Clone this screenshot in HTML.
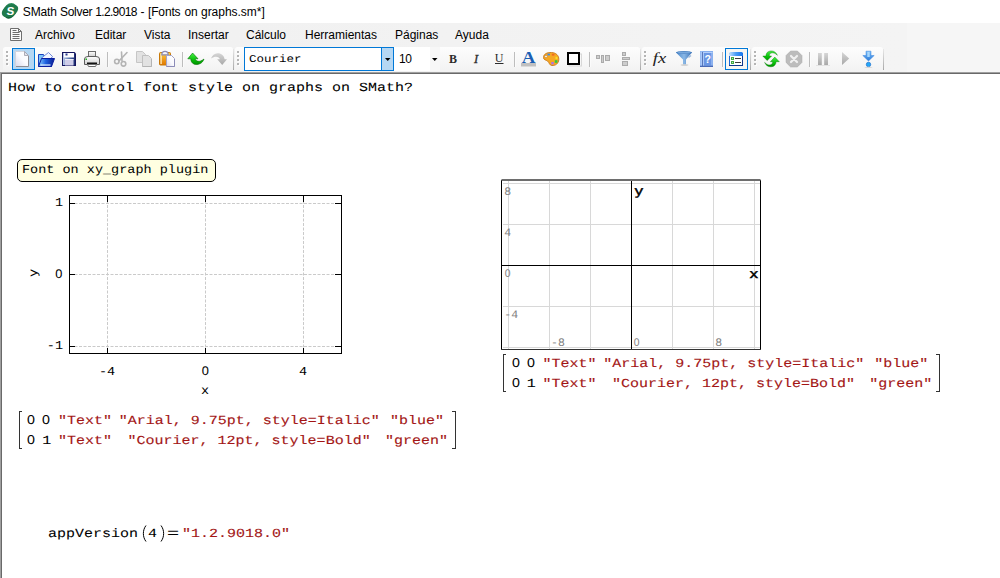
<!DOCTYPE html>
<html><head><meta charset="utf-8"><title>SMath Solver</title>
<style>
html,body{margin:0;padding:0;}
body{width:1000px;height:578px;overflow:hidden;background:linear-gradient(to right,#f0f0f0 0,#f4f4f4 907px,#f6f6f6 907px,#f6f6f6 1000px);position:relative;font-family:"Liberation Sans",sans-serif;font-size:12px;color:#000;}
.abs{position:absolute;}
#title{left:0;top:0;width:1000px;height:23px;background:#fff;}
#title .tw{position:absolute;top:5px;font-size:12px;white-space:pre;line-height:14px;}
#menu{left:0;top:23px;width:1000px;height:23px;}
#menu span{position:absolute;top:5px;line-height:14px;white-space:nowrap;font-size:12px;}
#tb{left:0;top:46px;width:1000px;height:26px;}
#sheet{left:0;top:72px;width:1000px;height:506px;background:#fff;border-top:1px solid #a0a0a0;border-left:1px solid #a0a0a0;box-sizing:border-box;}
#sheet:before{content:"";position:absolute;left:0;top:0;width:1000px;height:1px;background:#696969;}
#sheet:after{content:"";position:absolute;left:0;top:0;width:1px;height:506px;background:#696969;}
.m{font-family:"Liberation Mono",monospace;white-space:pre;position:absolute;line-height:1;text-rendering:geometricPrecision;transform:scaleY(0.83);transform-origin:0 0;}
.f15{font-size:15px;-webkit-text-stroke:0.08px #000;}
.f13{font-size:13.5px;transform:scaleY(0.90);}
.z{position:absolute;font-family:"Liberation Sans",sans-serif;font-size:15px;line-height:1;text-rendering:geometricPrecision;transform:scale(0.95,0.86);transform-origin:0 0;}
.red{color:#a31515;-webkit-text-stroke:0.15px #a31515;}
.lbl{left:17px;top:159px;width:197px;height:21px;border:1px solid #000;border-radius:5px;background:#ffffe1;}
.brl{width:3px;height:38px;border:1px solid #333;border-right:none;box-sizing:border-box;}
.brr{width:4px;height:38px;border:1px solid #333;border-left:none;box-sizing:border-box;}
</style></head><body>
<div id="title" class="abs"><span class="tw" style="left:22.8px;letter-spacing:-0.15px">SMath </span><span class="tw" style="left:60px;letter-spacing:-0.3px">Solver </span><span class="tw" style="left:95.2px;letter-spacing:-0.65px">1.2.9018 </span><span class="tw" style="left:140.4px;letter-spacing:0px">- </span><span class="tw" style="left:148px;letter-spacing:-0.15px">[Fonts </span><span class="tw" style="left:184.4px;letter-spacing:-0.05px">on </span><span class="tw" style="left:201px;letter-spacing:-0.03px">graphs.sm*]</span></div>
<div id="menu" class="abs">
<span style="left:35px">Archivo</span><span style="left:95px">Editar</span><span style="left:144px">Vista</span><span style="left:188px">Insertar</span><span style="left:246px">Cálculo</span><span style="left:305px">Herramientas</span><span style="left:395px">Páginas</span><span style="left:455px">Ayuda</span>
</div>
<svg class="abs" style="left:0;top:0" width="24" height="23" viewBox="0 0 24 23">
<defs><linearGradient id="gLogo" x1="0" y1="0" x2="0" y2="1"><stop offset="0" stop-color="#2f9462"/><stop offset="0.45" stop-color="#1f7a4c"/><stop offset="1" stop-color="#0b5a2f"/></linearGradient></defs>
<ellipse cx="10" cy="10.800" rx="6.300" ry="8.200" transform="rotate(28 10 10.800)" fill="url(#gLogo)"/>
<ellipse cx="10" cy="10.800" rx="8.800" ry="5.800" transform="rotate(-30 10 10.800)" fill="#1f7a4c"/>
<text transform="translate(10.200 15) skewX(-6)" text-anchor="middle" font-family="'Liberation Sans',sans-serif" font-size="11.500" font-weight="bold" fill="#fff">S</text>
</svg>
<svg class="abs" style="left:8px;top:26px" width="16" height="17" viewBox="8 26 16 17">
<path d="M10.500 28.500H18.500L21.500 31.500V40.500H10.500Z" fill="#fbfbfb" stroke="#6e6e6e" stroke-width="1"/>
<path d="M18.500 28.500V31.500H21.500" fill="none" stroke="#6e6e6e" stroke-width="1"/>
<path d="M12.500 30.500H16.500M12.500 32.500H19.500M12.500 34.500H19.500M12.500 36.500H19.500M12.500 38.500H19.500" stroke="#6e6e6e" stroke-width="1"/>
</svg>
<div id="tb" class="abs"></div>
<svg class="abs" style="left:0;top:46px" width="1000" height="26" viewBox="0 46 1000 26">
<defs>
<linearGradient id="gS" x1="0" y1="0" x2="0" y2="1"><stop offset="0" stop-color="#fdfdfd"/><stop offset="1" stop-color="#f3f3f3"/></linearGradient>
<linearGradient id="gL" x1="0" y1="0" x2="0" y2="1"><stop offset="0" stop-color="#e8e8e8"/><stop offset="1" stop-color="#a8a8a8"/></linearGradient>
<linearGradient id="gDoc" x1="1" y1="0" x2="0" y2="1"><stop offset="0" stop-color="#ffffff"/><stop offset="0.5" stop-color="#fafafe"/><stop offset="1" stop-color="#d8d8ea"/></linearGradient>
<linearGradient id="gFold" x1="0" y1="0" x2="1" y2="0"><stop offset="0" stop-color="#8ad0ff"/><stop offset="0.45" stop-color="#1e62e0"/><stop offset="1" stop-color="#0a1c90"/></linearGradient>
<linearGradient id="gOr" x1="0" y1="0" x2="0" y2="1"><stop offset="0" stop-color="#f8d040"/><stop offset="0.5" stop-color="#f0a020"/><stop offset="1" stop-color="#e07800"/></linearGradient>
<linearGradient id="gGr" x1="0" y1="0" x2="0" y2="1"><stop offset="0" stop-color="#48f048"/><stop offset="0.6" stop-color="#08c008"/><stop offset="1" stop-color="#009000"/></linearGradient>
<linearGradient id="gGy" x1="0" y1="0" x2="0" y2="1"><stop offset="0" stop-color="#d6d6d6"/><stop offset="1" stop-color="#a8a8a8"/></linearGradient>
<linearGradient id="gBl" x1="0" y1="0" x2="0" y2="1"><stop offset="0" stop-color="#7cc0fa"/><stop offset="1" stop-color="#2a78d8"/></linearGradient>
<linearGradient id="gFun" x1="0" y1="0" x2="1" y2="0"><stop offset="0" stop-color="#4a86c8"/><stop offset="0.5" stop-color="#8ab8e6"/><stop offset="1" stop-color="#3a70b4"/></linearGradient>
<linearGradient id="gSave" x1="0" y1="0" x2="1" y2="0"><stop offset="0" stop-color="#b8c8e8"/><stop offset="0.5" stop-color="#5a78b0"/><stop offset="1" stop-color="#1a2a70"/></linearGradient>
<linearGradient id="gPr" x1="0" y1="0" x2="0" y2="1"><stop offset="0" stop-color="#ffffff"/><stop offset="1" stop-color="#d0d0d0"/></linearGradient>
<g id="grip"><g fill="#fdfdfd"><rect x="1" y="52" width="2" height="2"/><rect x="1" y="56" width="2" height="2"/><rect x="1" y="60" width="2" height="2"/><rect x="1" y="64" width="2" height="2"/></g><g fill="#b4b4b4"><rect x="0" y="51" width="2" height="2"/><rect x="0" y="55" width="2" height="2"/><rect x="0" y="59" width="2" height="2"/><rect x="0" y="63" width="2" height="2"/></g></g>
<g id="sep"><rect x="0" y="52" width="1" height="15" fill="#bdbdbd"/><rect x="1" y="52" width="1" height="15" fill="#fbfbfb"/></g>
<linearGradient id="gBook" x1="0" y1="0" x2="1" y2="1"><stop offset="0" stop-color="#8db4f2"/><stop offset="1" stop-color="#5f8de0"/></linearGradient>
<linearGradient id="gTitle" x1="0" y1="0" x2="1" y2="0"><stop offset="0" stop-color="#c4e2ff"/><stop offset="0.5" stop-color="#4a9cf6"/><stop offset="1" stop-color="#1474ee"/></linearGradient>
</defs>
<!-- strips -->
<path d="M3 70V49.5Q3 47 5.5 47H230.5Q233 47 233 49.5V70Z" fill="url(#gS)"/>
<rect x="233" y="49" width="1" height="21" fill="url(#gL)"/>
<path d="M235 70V49.5Q235 47 237.5 47H637.5Q640 47 640 49.5V70Z" fill="url(#gS)"/>
<rect x="640" y="49" width="1" height="21" fill="url(#gL)"/>
<path d="M642 70V49.5Q642 47 644.5 47H747.5Q750 47 750 49.5V70Z" fill="url(#gS)"/>
<rect x="750" y="49" width="1" height="21" fill="url(#gL)"/>
<path d="M752 70V49.5Q752 47 754.5 47H880.5Q883 47 883 49.5V70Z" fill="url(#gS)"/>
<rect x="883" y="49" width="1" height="21" fill="url(#gL)"/>
<use href="#grip" x="6"/><use href="#grip" x="237"/><use href="#grip" x="644"/><use href="#grip" x="754"/>
<use href="#sep" x="107"/><use href="#sep" x="182"/><use href="#sep" x="514"/><use href="#sep" x="589"/><use href="#sep" x="722"/><use href="#sep" x="809"/>
<!-- selected buttons -->
<rect x="12.5" y="48.5" width="22" height="21" fill="#b5d7f3" stroke="#0078d7"/>
<rect x="725.5" y="48.5" width="22" height="21" fill="#f6f6f4" stroke="#0078d7"/>
<!-- new doc -->
<path d="M15.500 51.500H24.500L28.500 55.500V66.500H15.500Z" fill="url(#gDoc)" stroke="#d4d4dc" stroke-width="1"/>
<path d="M28.500 56V66.500H16" fill="none" stroke="#8c8c94" stroke-width="1"/>
<path d="M24.5 51.5V55.5H28.5Z" fill="#e4e4ee" stroke="#9c9ca8" stroke-width="0.8"/>
<!-- open folder -->
<path d="M38.5 54.5H43.5L44.5 56.5H51.5V66.5H38.5Z" fill="#7cc4f8" stroke="#1a40c0" stroke-width="1"/>
<path d="M41.5 58L48.5 52.5L52.5 56.5L50 60Z" fill="#f4f6ff" stroke="#5070d0" stroke-width="0.8"/>
<path d="M41.5 58.5H54.5L51.5 66.5H38.5Z" fill="url(#gFold)" stroke="#0a1ea0" stroke-width="1"/>
<path d="M40.5 65H50.5" stroke="#e8f0ff" stroke-width="1.2"/>
<!-- save -->
<path d="M62 52H74.5L76 53.5V66H62Z" fill="#15155e"/>
<rect x="63" y="53" width="12" height="12" fill="url(#gSave)"/>
<rect x="64" y="53" width="10" height="4.5" fill="#fdfdff"/>
<rect x="65.5" y="53.5" width="2" height="2" fill="#2a3a90"/>
<rect x="65" y="59" width="8.5" height="6.5" fill="#cfcde8"/>
<rect x="65" y="59" width="8.5" height="1" fill="#f0f0fa"/>
<!-- printer -->
<rect x="88.5" y="51.5" width="7" height="5" fill="url(#gPr)" stroke="#6c6c6c" stroke-width="1"/>
<path d="M84.5 59Q84.5 56.5 88 56.5H96Q99.5 56.5 99.5 59V64.5H84.5Z" fill="url(#gPr)" stroke="#5c5c5c" stroke-width="1"/>
<rect x="87" y="62.5" width="10" height="1.5" fill="#111"/>
<path d="M87.500 64.500H96.500L95.500 66.500H88.500Z" fill="#fff" stroke="#6c6c6c" stroke-width="1"/>
<rect x="85.500" y="58.500" width="1.5" height="1.5" fill="#20b020"/>
<!-- scissors -->
<g fill="none" stroke="#b4b4b4" stroke-width="1.6" stroke-linecap="round">
<path d="M121.500 52L122 61"/><path d="M127 52.500L119 61"/>
<circle cx="116.800" cy="61.500" r="2.200"/><circle cx="123.500" cy="63.800" r="2.300"/>
</g>
<!-- copy -->
<path d="M136.500 51.500H142.500L145.500 54.500V62.500H136.500Z" fill="#e2e2e2" stroke="#c6c6c6"/>
<path d="M142.500 55.500H148.500L151.500 58.500V66.500H142.500Z" fill="#e2e2e2" stroke="#c0c0c0"/>
<path d="M151.500 59V66.500H142.500" fill="none" stroke="#b4b4b4"/>
<!-- paste -->
<rect x="159.500" y="52.500" width="11" height="12.500" rx="1" fill="url(#gOr)" stroke="#c87808" stroke-width="1"/>
<rect x="160.500" y="53.500" width="1.2" height="10.500" fill="#fff4d0"/>
<path d="M161.800 54.800Q161.800 51.300 165 51.300Q168.200 51.300 168.200 54.800Z" fill="#f4f4fa" stroke="#8c8cb4" stroke-width="1.200"/>
<path d="M166.500 55.500H171.500L174.500 58.500V66.500H166.500Z" fill="url(#gDoc)" stroke="#a4a4c8"/>
<path d="M174.500 59V66.500H166.500" fill="none" stroke="#8c8cb8"/>
<!-- undo -->
<path d="M192.600 53L198 58.800H195.200C195.600 61.300 199.500 62.800 204 59C202.500 63.800 197.500 65.200 194.300 64.200C191.800 63.300 190.800 61 190.800 58.800H187.800Z" fill="url(#gGr)" stroke="#007000" stroke-width="0.6"/>
<!-- redo -->
<path d="M222.200 65L227 59.200H224.600C224.200 55.500 221 53 217.500 53.200C214.500 53.400 212.200 55.300 211 58.600C214.500 55.800 219.300 56.200 219.900 59.200H217.200Z" fill="url(#gGy)"/>
<!-- font combo -->
<rect x="244.500" y="47.500" width="149" height="23" fill="#fff" stroke="#0078d7"/>
<rect x="381.500" y="47.500" width="12" height="23" fill="#b5d7f3" stroke="#0078d7"/>
<path d="M385 58H390.500L387.750 61Z" fill="#000"/>
<text transform="translate(249 61.600) scale(1.04 0.88)" text-rendering="geometricPrecision" font-family="'Liberation Mono',monospace" font-size="12" fill="#000">Courier</text>
<!-- size combo -->
<rect x="394" y="47" width="36" height="24" fill="#fff"/>
<rect x="430" y="47" width="10" height="24" fill="#f7f7f7"/>
<path d="M432 58H437.500L434.750 61Z" fill="#000"/>
<text x="399" y="63" font-family="'Liberation Sans',sans-serif" font-size="12" letter-spacing="-0.5" fill="#000">10</text>
<!-- B I U -->
<text x="453" y="63" text-anchor="middle" font-family="'Liberation Serif',serif" font-size="12" font-weight="bold" fill="#2c2c2c">B</text>
<text x="476" y="63" text-anchor="middle" font-family="'Liberation Serif',serif" font-size="12.500" font-style="italic" fill="#2c2c2c" stroke="#2c2c2c" stroke-width="0.300">I</text>
<text x="499" y="62" text-anchor="middle" font-family="'Liberation Serif',serif" font-size="12" fill="#2c2c2c">U</text>
<rect x="495" y="63" width="8.500" height="1" fill="#2c2c2c"/>
<!-- A -->
<text transform="translate(528.500 62.700) scale(1.1 1)" text-anchor="middle" font-family="'Liberation Serif',serif" font-size="17.300" font-weight="bold" fill="#1b5eb3">A</text>
<rect x="521" y="63" width="15" height="3.500" fill="#c0c0c0"/>
<!-- palette -->
<path d="M543.500 57.500C543.500 54 547 52.300 551.500 52.500C556 52.700 559 55.500 558.800 59.500C558.600 63.500 555.500 65.800 552 65.500C549 65.200 549.500 62.500 547.500 61C545.800 59.800 543.500 60 543.500 57.500Z" fill="#f6a821" stroke="#c9781a" stroke-width="0.9"/>
<circle cx="546" cy="56.500" r="1.200" fill="#fff" stroke="#a86a20" stroke-width="0.5"/>
<rect x="547.500" y="53.600" width="2.400" height="1.800" fill="#3a8af0"/>
<rect x="551.800" y="53.800" width="2.600" height="1.800" fill="#f06820"/>
<rect x="555.500" y="56.800" width="2" height="2.400" fill="#f8e020"/>
<rect x="554.800" y="60.200" width="2.600" height="2.600" fill="#30c840"/>
<rect x="551.300" y="62" width="2.400" height="2.400" fill="#b070e8"/>
<!-- square -->
<rect x="569" y="54" width="12.500" height="12" fill="none" stroke="#d8d8d8" stroke-width="1"/>
<rect x="568" y="53" width="11" height="11" fill="#fff" stroke="#000" stroke-width="2"/>
<!-- align icons -->
<g fill="#cdcdcd" stroke="#ababab" stroke-width="1">
<rect x="596.500" y="55.500" width="3" height="3"/><rect x="601.500" y="55.500" width="2" height="7"/><rect x="605.500" y="55.500" width="4" height="5"/>
<rect x="622.500" y="52.500" width="3" height="3"/><rect x="622.500" y="57.500" width="7" height="2"/><rect x="622.500" y="61.500" width="5" height="4"/>
</g>
<!-- fx -->
<text transform="translate(652.800 62.500) scale(1.2 0.94)" font-family="'Liberation Serif',serif" font-size="15.500" font-style="italic" fill="#222">fx</text>
<!-- funnel -->
<path d="M676 52.500C676 51 692 51 692 52.500L686 59.500V64.500H683V59.500Z" fill="url(#gFun)"/>
<ellipse cx="684" cy="52.500" rx="8" ry="1.500" fill="#4a80c0"/>
<ellipse cx="684" cy="52.700" rx="6.500" ry="0.900" fill="#78a8dc"/>
<path d="M688.500 57.500L691 55.500" stroke="#9ab8dc" stroke-width="1.400" fill="none"/>
<ellipse cx="684.500" cy="65" rx="4" ry="0.800" fill="#c8c8c8"/>
<!-- help book -->
<rect x="700" y="51" width="13" height="16" fill="#86aeee"/>
<rect x="700.500" y="51.500" width="1.500" height="15" fill="#a9c8f8"/>
<rect x="702" y="52" width="1" height="14.500" fill="#5877ba"/>
<rect x="703" y="52" width="1" height="14.500" fill="#a9c7f6"/>
<rect x="704" y="53" width="8" height="12.500" fill="#6a96e4"/>
<rect x="703" y="52" width="9.500" height="1" fill="#b4cffa"/>
<rect x="711.300" y="53" width="0.900" height="12.500" fill="#9dbdf4"/>
<rect x="700" y="65.700" width="13" height="1.300" fill="#4a6ab6"/>
<text x="707.800" y="63" text-anchor="middle" font-family="'Liberation Sans',sans-serif" font-size="10.500" font-weight="bold" fill="#fff">?</text>
<!-- list window -->
<rect x="729.500" y="53.500" width="13" height="12" fill="#fff" stroke="#12388c" stroke-width="1"/>
<rect x="729" y="56" width="1" height="9" fill="#1c68d4"/>
<path d="M729 56V53.500Q729 52 730.500 52H741.500Q743 52 743 53.500V56Z" fill="url(#gTitle)"/>
<rect x="731" y="57" width="3" height="3" fill="#43a643"/><rect x="732" y="58" width="1" height="1" fill="#b4ecb4"/>
<rect x="731" y="61" width="3" height="3" fill="#43a643"/><rect x="732" y="62" width="1" height="1" fill="#b4ecb4"/>
<rect x="735" y="58" width="6" height="1" fill="#3c3c3c"/><rect x="735" y="62" width="6" height="1" fill="#3c3c3c"/>
<!-- refresh -->
<g fill="url(#gGr)" stroke="#007a00" stroke-width="0.400" stroke-linejoin="round">
<path d="M762.800 56H765.900C766.100 53 767.600 51.100 771 50.900C774 50.800 776.300 52.500 777.400 55.300C775.500 53.300 773.500 52.700 772 52.800C770 53 769.300 54.500 769.300 56H771.600L767.200 60.600Z"/>
<path d="M779.300 61.700H776.100C775.900 64.700 774.400 66.600 771 66.800C768 66.900 765.700 65.200 764.600 62.400C766.500 64.400 768.500 65 770 64.900C772 64.700 772.700 63.200 772.700 61.700H770.400L774.800 57.100Z"/>
</g>
<!-- stop -->
<path d="M790.500 51.200H797.500L801.800 55.500V62.500L797.500 66.800H790.500L786.200 62.500V55.500Z" fill="#bcbcbc" stroke="#ababab" stroke-width="0.800"/>
<path d="M791 56L797 62M797 56L791 62" stroke="#f0f0f0" stroke-width="2.200" stroke-linecap="round"/>
<!-- pause -->
<rect x="818" y="53" width="3.800" height="12" fill="url(#gGy)"/><rect x="824.200" y="53" width="3.800" height="12" fill="url(#gGy)"/>
<rect x="816" y="65" width="14" height="0.800" fill="#dedede"/>
<!-- play -->
<path d="M842 52L849.200 58.500L842 65Z" fill="url(#gGy)"/>
<!-- download -->
<path d="M866 51.200H871V55.500H874.200L868.500 61L862.800 55.500H866Z" fill="url(#gBl)" stroke="#3a84dc" stroke-width="0.500"/><rect x="867.300" y="52" width="2.400" height="5" fill="#a8d8fc"/>
<circle cx="868.500" cy="64.500" r="2.200" fill="#22a8f8" stroke="#2a78d0" stroke-width="0.800"/>
<ellipse cx="868.500" cy="67.300" rx="4" ry="0.600" fill="#d4d4d4"/>
</svg>
<div id="sheet" class="abs"></div>
<div class="m f15 " style="left:8px;top:82.46px;">How to control font style on graphs on SMath?</div>
<div class="lbl abs"></div>
<div class="m f13 " style="left:22px;top:164.69px;">Font on xy_graph plugin</div>
<svg class="abs" style="left:20px;top:185px" width="340" height="215" viewBox="20 185 340 215">
<g stroke="#cacaca" stroke-width="1" stroke-dasharray="3,1.5" fill="none">
<path d="M107.5 196V353M205.5 196V353M303.5 196V353M70 203.5H341M70 274.5H341M70 346.5H341"/>
</g>
<g stroke="#000" stroke-width="1" fill="none" shape-rendering="crispEdges">
<rect x="69.5" y="195.5" width="272" height="158"/>
<path d="M107.5 196V202M205.5 196V202M303.5 196V202M107.5 348V353M205.5 348V353M303.5 348V353"/>
<path d="M70 203.5H75M70 274.5H75M70 346.5H75M335 203.5H341M335 274.5H341M335 346.5H341"/>
</g>
<g font-family="'Liberation Mono',monospace" font-size="13.5" fill="#000" text-rendering="geometricPrecision">
<text transform="translate(63 206) scale(1 0.9)" text-anchor="end">1</text>
<text transform="translate(62.300 278) scale(0.95 0.93)" text-anchor="end" font-family="'Liberation Sans',sans-serif">0</text>
<text transform="translate(63 349) scale(1 0.9)" text-anchor="end">-1</text>
<text transform="translate(107 375) scale(1 0.9)" text-anchor="middle">-4</text>
<text transform="translate(205.300 375) scale(0.95 0.93)" text-anchor="middle" font-family="'Liberation Sans',sans-serif">0</text>
<text transform="translate(303 375) scale(1 0.9)" text-anchor="middle">4</text>
<text transform="translate(205 394) scale(1 0.9)" text-anchor="middle">x</text>
<text transform="translate(37 273) rotate(-90) scale(1 0.9)" text-anchor="middle">y</text>
</g>
</svg>
<svg class="abs" style="left:495px;top:175px" width="275" height="180" viewBox="495 175 275 180">
<rect x="501" y="180" width="260" height="170" fill="#fff"/>
<g stroke="#d8d8d8" stroke-width="1" fill="none" shape-rendering="crispEdges">
<path d="M508.5 181V349M549.5 181V349M590.5 181V349M672.5 181V349M713.5 181V349M754.5 181V349M503 183.500H760M503 224.500H760M503 306.500H760M503 347.500H760"/>
</g>
<g stroke="#000" stroke-width="1" fill="none" shape-rendering="crispEdges">
<path d="M631.500 181V349M502 265.500H760"/>
<path d="M501.500 180V349M760.500 180V349"/>
<path d="M501 349.500H761" stroke="#333"/>
</g>
<rect x="501.500" y="179" width="259" height="2" fill="#6e6e6e"/>
<g font-family="'Liberation Mono',monospace" font-size="11.500" fill="#808080" text-rendering="geometricPrecision">
<text x="504.300" y="195">8</text>
<text x="504.300" y="236">4</text>
<text transform="translate(504.700 277) scale(0.9 0.97)" font-family="'Liberation Sans',sans-serif">0</text>
<text x="504.300" y="318">-4</text>
<text x="551" y="346">-8</text>
<text transform="translate(633.700 346) scale(0.9 0.97)" font-family="'Liberation Sans',sans-serif">0</text>
<text x="715.300" y="346">8</text>
</g>
<g font-family="'Liberation Mono',monospace" font-size="14" fill="#000" stroke="#000" stroke-width="0.550" text-rendering="geometricPrecision">
<text transform="translate(634.300 194.900) scale(1.1 0.9)">y</text>
<text transform="translate(749.300 278.200) scale(1.1 0.9)">x</text>
</g>
</svg>
<div class="brl abs" style="left:503px;top:354px"></div><div class="brr abs" style="left:936px;top:354px"></div>
<div class="z" style="left:511.8px;top:357.38px;">0</div>
<div class="z" style="left:526.8px;top:357.38px;">0</div>
<div class="m f15 red" style="left:542.5px;top:358.46px;">&quot;Text&quot;</div>
<div class="m f15 red" style="left:603.2px;top:358.46px;">&quot;Arial, 9.75pt, style=Italic&quot;</div>
<div class="m f15 red" style="left:874.3px;top:358.46px;">&quot;blue&quot;</div>
<div class="z" style="left:511.8px;top:377.38px;">0</div>
<div class="m f15 " style="left:526.7px;top:378.46px;">1</div>
<div class="m f15 red" style="left:542.5px;top:378.46px;">&quot;Text&quot;</div>
<div class="m f15 red" style="left:612px;top:378.46px;">&quot;Courier, 12pt, style=Bold&quot;</div>
<div class="m f15 red" style="left:869.3px;top:378.46px;">&quot;green&quot;</div>
<div class="brl abs" style="left:19px;top:411px"></div><div class="brr abs" style="left:452px;top:411px"></div>
<div class="z" style="left:27.4px;top:414.38px;">0</div>
<div class="z" style="left:42.4px;top:414.38px;">0</div>
<div class="m f15 red" style="left:58.1px;top:415.46px;">&quot;Text&quot;</div>
<div class="m f15 red" style="left:118.8px;top:415.46px;">&quot;Arial, 9.75pt, style=Italic&quot;</div>
<div class="m f15 red" style="left:389.9px;top:415.46px;">&quot;blue&quot;</div>
<div class="z" style="left:27.4px;top:434.38px;">0</div>
<div class="m f15 " style="left:42.3px;top:435.46px;">1</div>
<div class="m f15 red" style="left:58.1px;top:435.46px;">&quot;Text&quot;</div>
<div class="m f15 red" style="left:127.6px;top:435.46px;">&quot;Courier, 12pt, style=Bold&quot;</div>
<div class="m f15 red" style="left:384.9px;top:435.46px;">&quot;green&quot;</div>
<div class="m f15 " style="left:48px;top:528.46px;">appVersion</div>
<div class="m f15 " style="left:148px;top:528.46px;">4</div>
<div class="m f15 " style="transform:scale(1.35,0.83);left:166.6px;top:528.46px;">=</div>
<div class="m f15 red" style="left:182px;top:528.46px;">&quot;1.2.9018.0&quot;</div>
<svg class="abs" style="left:140px;top:523px" width="28" height="22" viewBox="0 0 28 22"><path d="M6 2.5C2.5 7 2.5 14 6 18.5M21 2.5C24.500 7 24.500 14 21 18.5" stroke="#000" stroke-width="1" fill="none"/></svg>
</body></html>
